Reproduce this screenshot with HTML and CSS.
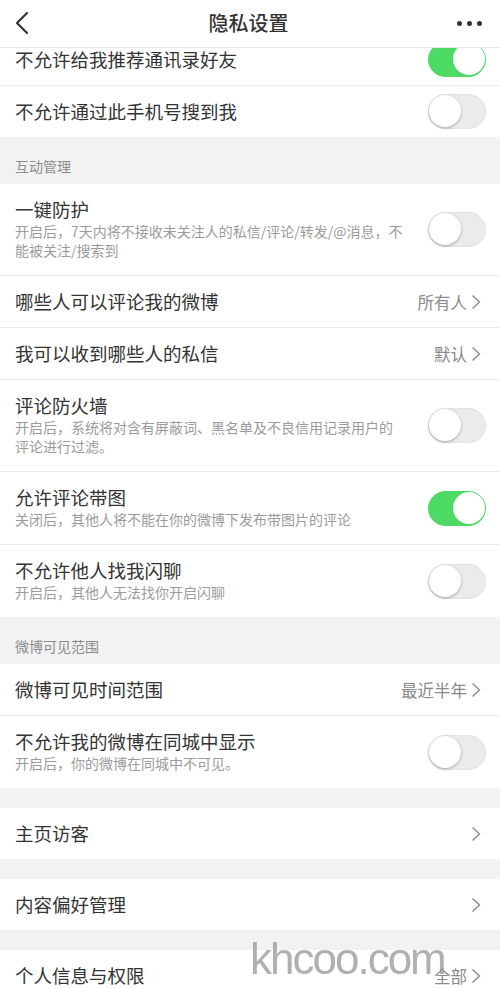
FILE: index.html
```html
<!DOCTYPE html>
<html lang="zh-CN">

<head>
    <meta charset="UTF-8">
    <meta name="viewport" content="width=device-width, initial-scale=1.0">
    <title>隐私设置</title>
    <link rel="stylesheet" href="styles.css">
</head>

<body>
    <header class="nav">
        <span class="nav-back">
            <svg width="14" height="24" viewBox="0 0 14 24"><path d="M12 2 L2 12 L12 22" fill="none" stroke="#333" stroke-width="2.2" stroke-linecap="round" stroke-linejoin="round"/></svg>
        </span>
        <h1 class="nav-title">隐私设置</h1>
        <span class="nav-more">
            <i></i><i></i><i></i>
        </span>
    </header>

    <main class="page">
        <div class="group">
            <div class="row">
                <div class="row-text"><div class="row-title">不允许给我推荐通讯录好友</div></div>
                <span class="switch on"></span>
            </div>
            <div class="row">
                <div class="row-text"><div class="row-title">不允许通过此手机号搜到我</div></div>
                <span class="switch"></span>
            </div>
        </div>

        <div class="section-label">互动管理</div>
        <div class="group">
            <div class="row">
                <div class="row-text">
                    <div class="row-title">一键防护</div>
                    <div class="row-desc">开启后，7天内将不接收未关注人的私信/评论/转发/@消息，不能被关注/搜索到</div>
                </div>
                <span class="switch"></span>
            </div>
            <div class="row">
                <div class="row-text"><div class="row-title">哪些人可以评论我的微博</div></div>
                <span class="row-value">所有人</span>
                <svg class="chevron" width="10" height="16" viewBox="0 0 10 16"><path d="M1.5 1.5 L8.5 8 L1.5 14.5" /></svg>
            </div>
            <div class="row">
                <div class="row-text"><div class="row-title">我可以收到哪些人的私信</div></div>
                <span class="row-value">默认</span>
                <svg class="chevron" width="10" height="16" viewBox="0 0 10 16"><path d="M1.5 1.5 L8.5 8 L1.5 14.5" /></svg>
            </div>
            <div class="row">
                <div class="row-text">
                    <div class="row-title">评论防火墙</div>
                    <div class="row-desc">开启后，系统将对含有屏蔽词、黑名单及不良信用记录用户的评论进行过滤。</div>
                </div>
                <span class="switch"></span>
            </div>
            <div class="row">
                <div class="row-text">
                    <div class="row-title">允许评论带图</div>
                    <div class="row-desc">关闭后，其他人将不能在你的微博下发布带图片的评论</div>
                </div>
                <span class="switch on"></span>
            </div>
            <div class="row">
                <div class="row-text">
                    <div class="row-title">不允许他人找我闪聊</div>
                    <div class="row-desc">开启后，其他人无法找你开启闪聊</div>
                </div>
                <span class="switch"></span>
            </div>
        </div>

        <div class="section-label">微博可见范围</div>
        <div class="group">
            <div class="row">
                <div class="row-text"><div class="row-title">微博可见时间范围</div></div>
                <span class="row-value">最近半年</span>
                <svg class="chevron" width="10" height="16" viewBox="0 0 10 16"><path d="M1.5 1.5 L8.5 8 L1.5 14.5" /></svg>
            </div>
            <div class="row">
                <div class="row-text">
                    <div class="row-title">不允许我的微博在同城中显示</div>
                    <div class="row-desc">开启后，你的微博在同城中不可见。</div>
                </div>
                <span class="switch"></span>
            </div>
        </div>

        <div class="gap"></div>
        <div class="group">
            <div class="row">
                <div class="row-text"><div class="row-title">主页访客</div></div>
                <svg class="chevron" width="10" height="16" viewBox="0 0 10 16"><path d="M1.5 1.5 L8.5 8 L1.5 14.5" /></svg>
            </div>
        </div>

        <div class="gap"></div>
        <div class="group">
            <div class="row">
                <div class="row-text"><div class="row-title">内容偏好管理</div></div>
                <svg class="chevron" width="10" height="16" viewBox="0 0 10 16"><path d="M1.5 1.5 L8.5 8 L1.5 14.5" /></svg>
            </div>
        </div>

        <div class="gap"></div>
        <div class="group">
            <div class="row">
                <div class="row-text"><div class="row-title">个人信息与权限</div></div>
                <span class="row-value">全部</span>
                <svg class="chevron" width="10" height="16" viewBox="0 0 10 16"><path d="M1.5 1.5 L8.5 8 L1.5 14.5" /></svg>
            </div>
        </div>
    </main>

    <div class="watermark">khcoo.com</div>
</body>

</html>
```

FILE: styles.css
```css
body {
    margin: 0;
    background-color: #f2f2f2;
    font-family: "Noto Sans CJK SC", "Noto Sans", sans-serif;
    color: #333;
    overflow: hidden;
}

.nav {
    position: fixed;
    top: 0;
    left: 0;
    right: 0;
    z-index: 2;
    height: 47px;
    background-color: #fff;
    border-bottom: 1px solid #e6e6e6;
    display: flex;
    align-items: center;
    justify-content: space-between;
    padding: 0 15px;
}

.nav-back {
    display: flex;
    width: 40px;
    margin-top: -2px;
}

.nav-title {
    margin: 0;
    font-size: 20px;
    font-weight: 500;
    color: #333;
    margin-top: -3px;
}

.nav-more {
    display: flex;
    gap: 5px;
    width: 40px;
    justify-content: flex-end;
    margin-right: 3px;
}

.nav-more i {
    width: 5px;
    height: 5px;
    border-radius: 50%;
    background-color: #333;
}

/* list is scrolled a little, first row sits under the nav */
.page {
    padding-top: 34px;
}

.group {
    background-color: #fff;
}

.row {
    display: flex;
    align-items: center;
    padding: 0 14px 0 15px;
    border-bottom: 1px solid #ececec;
}

.row:last-child {
    border-bottom: none;
}

.row-text {
    flex: 1;
    padding: 13px 0;
}

.row-title {
    font-size: 18.5px;
    line-height: 25px;
    color: #333;
}

.row-desc {
    width: 390px;
    font-size: 14px;
    line-height: 19px;
    color: #9b9b9b;
    margin-bottom: 2px;
}

.row-value {
    font-size: 16.5px;
    color: #8a8a8a;
    margin-right: 4px;
}

.chevron {
    fill: none;
    stroke: #8a8a8a;
    stroke-width: 1.4;
    margin-right: 5px;
    margin-top: 1px;
}

.switch {
    position: relative;
    width: 58px;
    height: 35px;
    border-radius: 18px;
    background-color: #ebebeb;
    box-sizing: border-box;
    border: 1.5px solid #e2e2e2;
    flex-shrink: 0;
    margin-left: 20px;
}

.switch::after {
    content: "";
    position: absolute;
    top: 0;
    left: 0;
    width: 32px;
    height: 32px;
    border-radius: 50%;
    background-color: #fff;
    box-shadow: 0 1px 3px rgba(0, 0, 0, 0.3);
}

.switch.on {
    background-color: #4cd964;
    border-color: #4cd964;
}

.switch.on::after {
    left: auto;
    right: 0;
    box-shadow: none;
}

.section-label {
    font-size: 14px;
    line-height: 18px;
    color: #8c8c8c;
    padding: 20px 15px 9px;
}

.gap {
    height: 20px;
}

.watermark {
    position: fixed;
    left: 250px;
    top: 934px;
    font-family: "Liberation Sans", Arial, sans-serif;
    font-size: 44px;
    letter-spacing: -2px;
    color: rgba(150, 150, 150, 0.75);
    z-index: 3;
}
```
